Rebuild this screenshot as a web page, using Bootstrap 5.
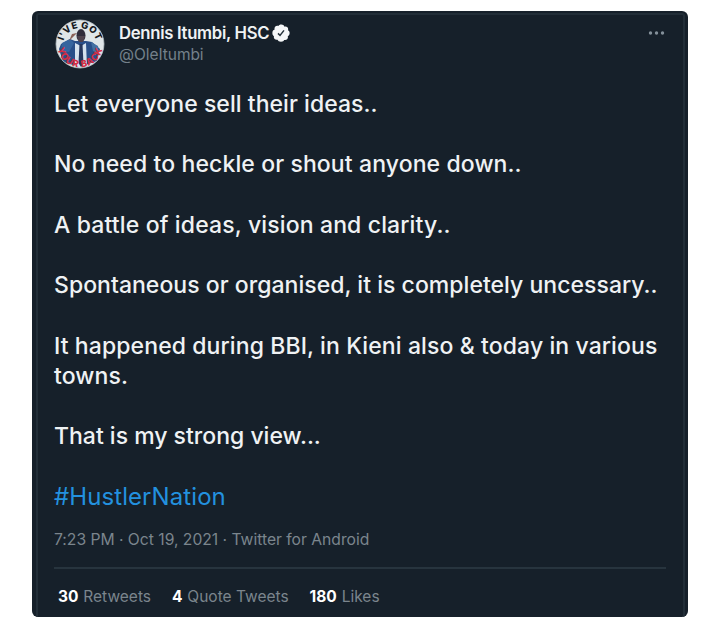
<!DOCTYPE html>
<html lang="en">
<head>
<meta charset="utf-8">
<meta name="viewport" content="width=device-width, initial-scale=1">
<title>Dennis Itumbi, HSC</title>
<link href="https://cdn.jsdelivr.net/npm/bootstrap@5.3.0/dist/css/bootstrap.min.css" rel="stylesheet">
<style>
body{background:#fff;font-family:Inter,"Liberation Sans",sans-serif;overflow:hidden}
.tweet-card{width:656px;height:606px;margin:11px 0 0 32px;background:#16202a;border-radius:6px;padding:2px 3px 0 4px;overflow:hidden;border:0}
.tweet-frame{height:604px;border:2px solid #222e38;border-bottom:0;border-radius:3px 3px 0 0;padding:5px 17px 0 16px;color:#eff2f4}
.avatar-pic{width:50px;height:50px;margin:-1px 0 1px 1px}
.who{margin:2px 0 0 14px}
.name{font-weight:600;font-size:16.7px;line-height:22px;letter-spacing:-.3px}
.tick{margin-left:3px}
.handle{font-size:15.5px;line-height:22px;color:#74808a;letter-spacing:-.05px}
.dots{margin:10px 1px 0 0}
.tweet-text{font-size:23px;line-height:30.25px;font-weight:500;margin-top:18.6px;white-space:nowrap}
.tweet-text p{margin:0 0 30.25px}
.ls-a{letter-spacing:.05px}.ls-b{letter-spacing:.11px}.ls-c{letter-spacing:.14px}.ls-d{letter-spacing:.03px}.ls-e{letter-spacing:.1px}
.tag{color:#2391df;font-weight:400;font-size:24px;line-height:30px;letter-spacing:.08px;text-decoration:none}
.meta{font-size:15.7px;line-height:22px;color:#7b858d;margin-top:-13.6px;letter-spacing:-.02px}
.rule{height:2px;background:#27343e;margin:16px 0 0}
.stats{font-size:15.5px;line-height:22px;color:#7b858d;margin:17px 0 0 4px;gap:21px}
.stats b{color:#fff;font-weight:700;margin-right:.5px}
</style>
</head>
<body>
<main class="card tweet-card">
<div class="tweet-frame">
<header class="d-flex align-items-start">
<svg class="avatar-pic flex-shrink-0" viewBox="0 0 50 50" aria-hidden="true">
<defs><clipPath id="disc"><circle cx="25" cy="25" r="24"/></clipPath>
<path id="arcTop" d="M8.500 29A16.800 16.800 0 1 1 41.500 29"/><path id="arcBottom" d="M2.600 20A23 23 0 1 0 47.400 20"/></defs>
<circle cx="25" cy="25" r="24" fill="#dfe5e8"/>
<g clip-path="url(#disc)">
<path d="M6 25l9-5 5 2h11l6 1 8 7-3 12-17 6-17-5-4-13z" fill="#294f89"/>
<path d="M7 24l8-4 4 4-5 9-8-1z" fill="#36659e"/><path d="M36 23l7 4 1 8-6-3z" fill="#4470a2"/>
<path d="M20 24l6 3 5-3 1 24H20z" fill="#d5e2ee"/><path d="M24.500 25h3l1 20-2.500 3-2.500-4z" fill="#26375d"/>
<path d="M14 22l3-7 5-1-4 4z" fill="#8b6259"/><ellipse cx="26" cy="16.500" rx="4.500" ry="6.500" fill="#302c3b"/><path d="M22 17h8l-2 6h-4z" fill="#4f424d"/>
</g>
<text font-size="9.500" font-weight="800" letter-spacing=".3" text-anchor="middle" fill="#15191e"><textPath href="#arcTop" startOffset="50%">I'VE GOT</textPath></text>
<text font-size="9.500" font-weight="800" letter-spacing=".7" text-anchor="middle" fill="#d52d43"><textPath href="#arcBottom" startOffset="50%">YOUR BACK</textPath></text>
<circle cx="25" cy="25" r="24" fill="none" stroke="#b9c1c7" stroke-width=".8"/>
</svg>
<div class="who flex-grow-1">
<div class="name d-flex align-items-center"><span>Dennis Itumbi, HSC</span>
<svg class="tick" width="18" height="18" viewBox="0 0 24 24" aria-label="Verified"><path fill="#f5f7f8" d="M23.500 12c0-1.600-.9-2.950-2.150-3.600.5-1.400.2-2.950-.8-4s-2.500-1.300-3.900-.8C16 1.350 14.500.5 12.500.5S9 1.350 8.400 2.600c-1.400-.5-2.950-.2-4 .8s-1.300 2.600-.8 4C1.350 8.100.5 9.500.5 12s.9 3.400 2.150 4.100c-.5 1.400-.2 3 .8 4s2.550 1.300 3.950.8c.7 1.600 2 2.600 4.600 2.600s3.600-1 4.200-2.250c1.400.5 2.950.2 4-.8s1.300-2.600.8-4c1.500-.9 2.500-2.200 2.500-4.450z"/><path d="M8 12.500l2.700 2.800L16 8.500" fill="none" stroke="#26323b" stroke-width="2"/></svg></div>
<div class="handle">@OleItumbi</div>
</div>
<svg class="dots" width="17" height="6" viewBox="0 0 17 6" fill="#84909a" aria-label="More"><circle cx="2.500" cy="3" r="1.700"/><circle cx="8.500" cy="3" r="1.700"/><circle cx="14.500" cy="3" r="1.700"/></svg>
</header>
<div class="tweet-text">
<p class="ls-a">Let everyone sell their ideas..</p>
<p class="ls-b">No need to heckle or shout anyone down..</p>
<p class="ls-c">A battle of ideas, vision and clarity..</p>
<p class="ls-d">Spontaneous or organised, it is completely uncessary..</p>
<p class="ls-e">It happened during BBI, in Kieni also &amp; today in various<br>towns.</p>
<p>That is my strong view...</p>
<p><a class="tag">#HustlerNation</a></p>
</div>
<div class="meta">7:23 PM · Oct 19, 2021 · Twitter for Android</div>
<div class="rule"></div>
<div class="stats d-flex"><div><b>30</b> Retweets</div><div><b>4</b> Quote Tweets</div><div><b>180</b> Likes</div></div>
</div>
</main>
<script src="https://cdn.jsdelivr.net/npm/bootstrap@5.3.0/dist/js/bootstrap.bundle.min.js"></script>
</body>
</html>
